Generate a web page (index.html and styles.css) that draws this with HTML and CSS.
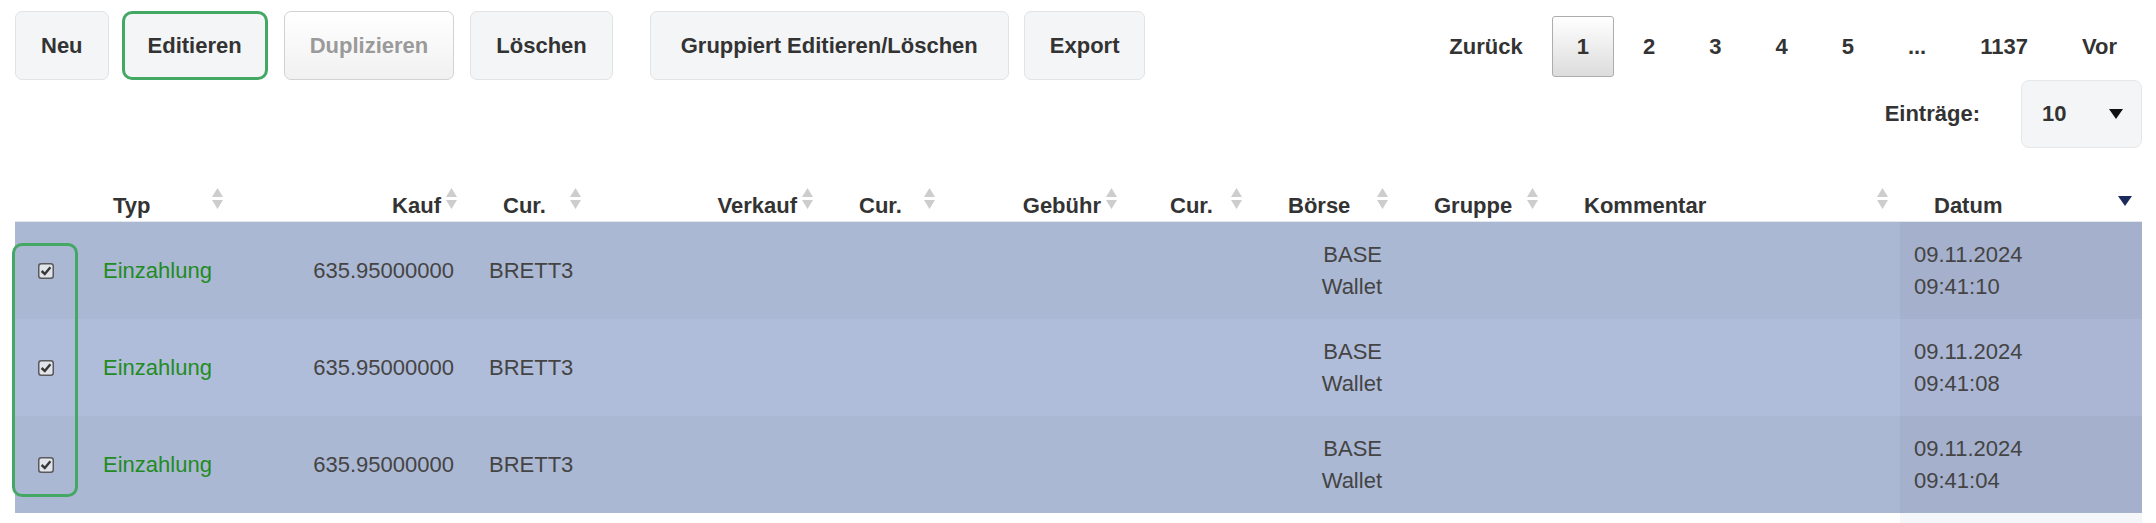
FILE: index.html
```html
<!DOCTYPE html>
<html lang="de">
<head>
  <meta charset="UTF-8">
  <title>Transaktionen</title>
  <link rel="stylesheet" href="styles.css">
</head>
<body>

  <div class="toolbar">
    <div class="actions">
      <button class="btn btn-first">Neu</button>
      <button class="btn btn-marked">Editieren</button>
      <button class="btn" disabled>Duplizieren</button>
      <button class="btn">Löschen</button>
      <button class="btn btn-gap">Gruppiert Editieren/Löschen</button>
      <button class="btn">Export</button>
    </div>

    <div class="side">
      <div class="pager">
        <span class="pg">Zurück</span>
        <span class="pg current">1</span>
        <span class="pg">2</span>
        <span class="pg">3</span>
        <span class="pg">4</span>
        <span class="pg">5</span>
        <span class="pg">...</span>
        <span class="pg">1137</span>
        <span class="pg">Vor</span>
      </div>
      <div class="length">
        <label>Einträge:</label>
        <div class="select">
          <span>10</span>
          <svg width="14" height="10" viewBox="0 0 14 10"><path d="M0 0 L14 0 L7 10 Z" fill="#111"/></svg>
        </div>
      </div>
    </div>
  </div>

  <table class="head">
    <colgroup>
      <col style="width:60px"><col style="width:156px"><col style="width:234px"><col style="width:124px">
      <col style="width:232px"><col style="width:122px"><col style="width:182px"><col style="width:125px">
      <col style="width:146px"><col style="width:150px"><col style="width:350px"><col style="width:246px">
    </colgroup>
    <thead>
      <tr>
        <th></th>
        <th><div class="th-in">Typ<svg class="sort" viewBox="0 0 11 22"><path d="M5.5 0 L11 9 L0 9 Z M0 12 L11 12 L5.5 21 Z"/></svg></div></th>
        <th class="right"><div class="th-in">Kauf<svg class="sort" viewBox="0 0 11 22"><path d="M5.5 0 L11 9 L0 9 Z M0 12 L11 12 L5.5 21 Z"/></svg></div></th>
        <th><div class="th-in">Cur.<svg class="sort" viewBox="0 0 11 22"><path d="M5.5 0 L11 9 L0 9 Z M0 12 L11 12 L5.5 21 Z"/></svg></div></th>
        <th class="right"><div class="th-in">Verkauf<svg class="sort" viewBox="0 0 11 22"><path d="M5.5 0 L11 9 L0 9 Z M0 12 L11 12 L5.5 21 Z"/></svg></div></th>
        <th><div class="th-in">Cur.<svg class="sort" viewBox="0 0 11 22"><path d="M5.5 0 L11 9 L0 9 Z M0 12 L11 12 L5.5 21 Z"/></svg></div></th>
        <th class="right"><div class="th-in">Gebühr<svg class="sort" viewBox="0 0 11 22"><path d="M5.5 0 L11 9 L0 9 Z M0 12 L11 12 L5.5 21 Z"/></svg></div></th>
        <th class="wide"><div class="th-in">Cur.<svg class="sort" viewBox="0 0 11 22"><path d="M5.5 0 L11 9 L0 9 Z M0 12 L11 12 L5.5 21 Z"/></svg></div></th>
        <th><div class="th-in">Börse<svg class="sort" viewBox="0 0 11 22"><path d="M5.5 0 L11 9 L0 9 Z M0 12 L11 12 L5.5 21 Z"/></svg></div></th>
        <th><div class="th-in">Gruppe<svg class="sort" viewBox="0 0 11 22"><path d="M5.5 0 L11 9 L0 9 Z M0 12 L11 12 L5.5 21 Z"/></svg></div></th>
        <th><div class="th-in">Kommentar<svg class="sort" viewBox="0 0 11 22"><path d="M5.5 0 L11 9 L0 9 Z M0 12 L11 12 L5.5 21 Z"/></svg></div></th>
        <th><div class="th-in">Datum<svg class="sort-desc" viewBox="0 0 14 10"><path d="M0 0 L14 0 L7 10 Z"/></svg></div></th>
      </tr>
    </thead>
  </table>

  <div class="body-wrap">
    <table class="rows">
      <colgroup>
        <col style="width:74px"><col style="width:151px"><col style="width:228px"><col style="width:122px">
        <col style="width:231px"><col style="width:119px"><col style="width:182px"><col style="width:125px">
        <col style="width:149px"><col style="width:149px"><col style="width:355px"><col style="width:242px">
      </colgroup>
      <tbody>
        <tr class="odd">
          <td class="check"><svg width="16" height="16" viewBox="0 0 16 16"><rect x="0.75" y="0.75" width="14.5" height="14.5" rx="2.5" fill="#e1e4ea" stroke="#5a5a5a" stroke-width="1.5"/><path d="M3.6 8 L6.8 11 L12.4 4.2" fill="none" stroke="#383838" stroke-width="2.4"/></svg></td>
          <td class="type">Einzahlung</td>
          <td class="num">635.95000000</td>
          <td class="cur">BRETT3</td>
          <td></td><td></td><td></td><td></td>
          <td class="num">BASE<br>Wallet</td>
          <td></td><td></td>
          <td class="sorted">09.11.2024<br>09:41:10</td>
        </tr>
        <tr class="even">
          <td class="check"><svg width="16" height="16" viewBox="0 0 16 16"><rect x="0.75" y="0.75" width="14.5" height="14.5" rx="2.5" fill="#e1e4ea" stroke="#5a5a5a" stroke-width="1.5"/><path d="M3.6 8 L6.8 11 L12.4 4.2" fill="none" stroke="#383838" stroke-width="2.4"/></svg></td>
          <td class="type">Einzahlung</td>
          <td class="num">635.95000000</td>
          <td class="cur">BRETT3</td>
          <td></td><td></td><td></td><td></td>
          <td class="num">BASE<br>Wallet</td>
          <td></td><td></td>
          <td class="sorted">09.11.2024<br>09:41:08</td>
        </tr>
        <tr class="odd">
          <td class="check"><svg width="16" height="16" viewBox="0 0 16 16"><rect x="0.75" y="0.75" width="14.5" height="14.5" rx="2.5" fill="#e1e4ea" stroke="#5a5a5a" stroke-width="1.5"/><path d="M3.6 8 L6.8 11 L12.4 4.2" fill="none" stroke="#383838" stroke-width="2.4"/></svg></td>
          <td class="type">Einzahlung</td>
          <td class="num">635.95000000</td>
          <td class="cur">BRETT3</td>
          <td></td><td></td><td></td><td></td>
          <td class="num">BASE<br>Wallet</td>
          <td></td><td></td>
          <td class="sorted">09.11.2024<br>09:41:04</td>
        </tr>
        <tr class="foot">
          <td></td><td></td><td></td><td></td><td></td><td></td>
          <td></td><td></td><td></td><td></td><td></td><td class="sorted"></td>
        </tr>
      </tbody>
    </table>
    <div class="mark"></div>
  </div>

</body>
</html>
```

FILE: styles.css
```css
body {
  margin: 0;
  padding: 0 14px 0 15px;
  font-family: "Liberation Sans", Arial, sans-serif;
  font-size: 22px;
  color: #333;
  background: #fff;
}

/* top bar */

.toolbar {
  display: flex;
  justify-content: space-between;
  align-items: flex-start;
  height: 148px;
}

.actions {
  display: flex;
  margin-top: 11px;
}

.btn {
  font-family: inherit;
  font-size: 22px;
  font-weight: bold;
  line-height: 25px;
  color: #333;
  background: #f4f5f6;
  border: 1px solid #e2e3e5;
  border-radius: 7px;
  padding: 21px 25px;
  margin-right: 16px;
}

.btn-first {
  margin-right: 13px;
}

.btn-marked {
  border: 3px solid #43a863;
  border-radius: 10px;
  padding: 19px 23px;
}

.btn[disabled] {
  color: #9a9a9a;
  background: linear-gradient(#fff, #f1f1f1);
  border-color: #d2d2d2;
}

.btn-gap {
  margin-left: 21px;
  margin-right: 15px;
  padding: 21px 30px;
}

.side {
  display: flex;
  flex-direction: column;
  align-items: flex-end;
}

.pager {
  display: flex;
  gap: 4px;
  margin-top: 16px;
}

.pg {
  font-weight: bold;
  line-height: 25px;
  padding: 17px 24px;
  border: 1px solid transparent;
  border-radius: 3px;
  color: #333;
}

.pg.current {
  border-color: #adadad;
  background: linear-gradient(#fff, #dcdcdc);
}

.length {
  display: flex;
  align-items: center;
  margin-top: 3px;
}

.length label {
  font-weight: bold;
  margin-right: 41px;
}

.select {
  display: flex;
  align-items: center;
  justify-content: space-between;
  box-sizing: border-box;
  width: 121px;
  height: 68px;
  padding: 0 18px 0 20px;
  background: #f4f5f6;
  border: 1px solid #e6e7e9;
  border-radius: 8px;
  font-weight: bold;
}

/* table header */

table {
  table-layout: fixed;
  width: 2127px;
  border-collapse: separate;
  border-spacing: 0;
}

.head th {
  padding: 40px 8px 3px 38px;
  border-bottom: 1px solid #e4e7ee;
  vertical-align: bottom;
  text-align: left;
  font-weight: bold;
}

.head th.wide {
  padding-left: 45px;
}

.th-in {
  display: flex;
  align-items: flex-end;
  line-height: 25px;
}

.th-in .sort {
  width: 11px;
  height: 22px;
  margin-left: auto;
  margin-bottom: 8px;
  fill: #cdcdcd;
  flex: none;
}

.right .th-in {
  justify-content: flex-end;
}

.right .th-in .sort {
  margin-left: 5px;
}

.th-in .sort-desc {
  width: 14px;
  height: 10px;
  margin-left: auto;
  margin-right: 2px;
  margin-bottom: 12px;
  fill: #1b2a5c;
  flex: none;
}

/* rows */

.body-wrap {
  position: relative;
}

.rows td {
  height: 97px;
  padding: 0 14px;
  line-height: 32px;
  color: #444;
  vertical-align: middle;
  white-space: nowrap;
}

.rows td.check {
  padding-left: 23px;
  line-height: 0;
}

.rows td.type {
  color: #228b22;
}

.rows td.num {
  text-align: right;
}

.rows td.cur {
  padding-left: 21px;
}

.odd td {
  background: #abb8d3;
}

.odd td.sorted {
  background: #a5b0cc;
}

.even td {
  background: #b0bdda;
}

.even td.sorted {
  background: #aab6d3;
}

.foot td {
  height: 11px;
  background: #fff;
}

.foot td.sorted {
  background: #f5f6f9;
}

.mark {
  position: absolute;
  left: -3px;
  top: 21px;
  width: 66px;
  height: 254px;
  box-sizing: border-box;
  border: 3px solid #43a863;
  border-radius: 10px;
}
```
